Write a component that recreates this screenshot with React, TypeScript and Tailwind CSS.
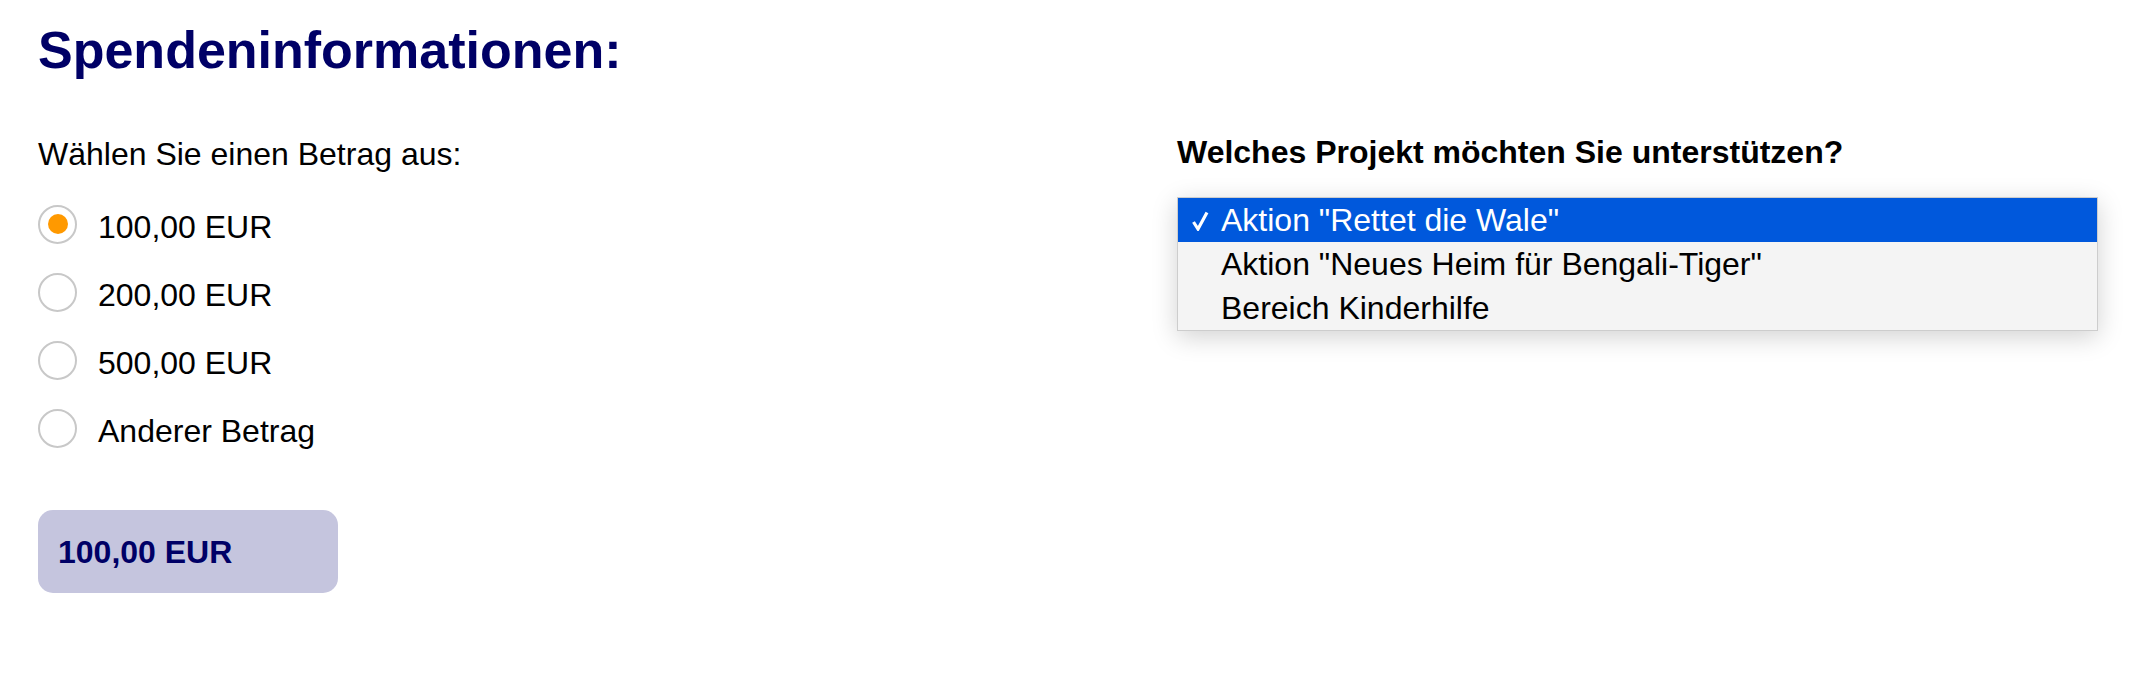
import React from "react";

const amounts = ["100,00 EUR", "200,00 EUR", "500,00 EUR", "Anderer Betrag"];
const projects = [
  'Aktion "Rettet die Wale"',
  'Aktion "Neues Heim für Bengali-Tiger"',
  "Bereich Kinderhilfe",
];

function Check() {
  return (
    <svg width="17" height="20" viewBox="0 0 17 20" className="mt-[2px]">
      <path d="M1.5 11 L6 18 L15 1.5" fill="none" stroke="currentColor" strokeWidth="3.2" strokeLinejoin="miter" />
    </svg>
  );
}

export default function App() {
  const [amount, setAmount] = React.useState(0);
  const [project, setProject] = React.useState(0);

  return (
    <div className="min-h-screen bg-white pl-[38px] pt-[20px] font-['Liberation_Sans',Arial,sans-serif] text-black">
      <h1 className="text-[52px] leading-[60px] font-bold text-[#000066]">Spendeninformationen:</h1>

      <div className="flex">
        {/* Betrag */}
        <div className="w-[1139px]">
          <p className="mt-[54px] text-[32px] leading-[40px]">Wählen Sie einen Betrag aus:</p>
          <div className="mt-[16px] flex flex-col">
            {amounts.map((a, i) => (
              <label key={a} className="flex h-[68px] cursor-pointer items-center" onClick={() => setAmount(i)}>
                <span className="flex h-[39px] w-[39px] items-center justify-center rounded-full border-2 border-[#c8c8c8] bg-white">
                  {amount === i && <span className="h-[20px] w-[20px] rounded-full bg-[#ff9900]" />}
                </span>
                <span className="ml-[21px] pt-[6px] text-[32px] leading-[40px]">{a}</span>
              </label>
            ))}
          </div>
          <div className="mt-[48px] flex h-[83px] w-[300px] items-center rounded-[15px] bg-[#c5c5de] pl-[20px] text-[32px] leading-[40px] font-bold text-[#000066]">
            {amount < 3 ? amounts[amount] : ""}
          </div>
        </div>

        {/* Projekt */}
        <div className="w-[921px]">
          <p className="mt-[52px] text-[32px] leading-[40px] font-bold">Welches Projekt möchten Sie unterstützen?</p>
          <ul className="mt-[25px] border border-[#cdcdcd] bg-[#f4f4f4] shadow-[0_6px_24px_rgba(0,0,0,0.18)]">
            {projects.map((p, i) => (
              <li
                key={p}
                onClick={() => setProject(i)}
                className={
                  "flex h-[44px] cursor-default items-center pl-[14px] text-[32px] leading-[44px] " +
                  (project === i ? "bg-[#0058dc] text-white" : "text-black")
                }
              >
                <span className="flex w-[29px] items-center">{project === i && <Check />}</span>
                {p}
              </li>
            ))}
          </ul>
        </div>
      </div>
    </div>
  );
}
